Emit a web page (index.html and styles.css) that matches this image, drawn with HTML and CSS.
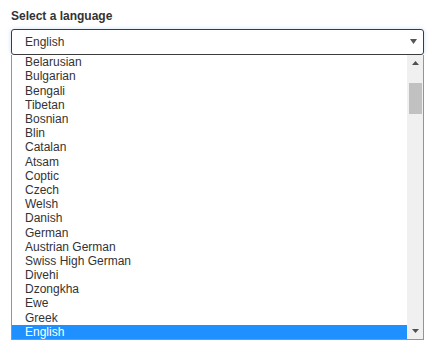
FILE: index.html
```html
<!DOCTYPE html>
<html>
<head>
<meta charset="utf-8">
<link rel="stylesheet" href="styles.css">
</head>
<body>
<div class="field">
  <div class="label">Select a language</div>
  <div class="select">
    <span class="value">English</span>
    <svg class="caret" width="7" height="5" viewBox="0 0 7 5"><path d="M0 0H7L3.5 5Z" fill="#555"/></svg>
  </div>
  <div class="popup">
    <ul class="options">
      <li>Belarusian</li>
      <li>Bulgarian</li>
      <li>Bengali</li>
      <li>Tibetan</li>
      <li>Bosnian</li>
      <li>Blin</li>
      <li>Catalan</li>
      <li>Atsam</li>
      <li>Coptic</li>
      <li>Czech</li>
      <li>Welsh</li>
      <li>Danish</li>
      <li>German</li>
      <li>Austrian German</li>
      <li>Swiss High German</li>
      <li>Divehi</li>
      <li>Dzongkha</li>
      <li>Ewe</li>
      <li>Greek</li>
      <li class="selected">English</li>
    </ul>
    <div class="scrollbar">
      <div class="arrow"><svg width="7" height="4" viewBox="0 0 7 4"><path d="M0 4H7L3.5 0Z" fill="#505050"/></svg></div>
      <div class="track"><div class="thumb"></div></div>
      <div class="arrow"><svg width="7" height="4" viewBox="0 0 7 4"><path d="M0 0H7L3.5 4Z" fill="#505050"/></svg></div>
    </div>
  </div>
</div>
</body>
</html>
```

FILE: styles.css
```css
html, body {
  margin: 0;
  padding: 0;
  background: #fff;
}
body {
  font-family: "Liberation Sans", Arial, sans-serif;
  font-size: 12px;
  color: #333;
}
.field {
  width: 413px;
  padding: 9px 0 0 11px;
}
.label {
  font-weight: bold;
  line-height: 15px;
  height: 15px;
  margin-bottom: 5px;
}
.select {
  box-sizing: border-box;
  height: 26px;
  border: 1px solid #3c3c3c;
  border-radius: 3px;
  box-shadow: 0 0 4px rgba(110, 160, 230, 0.35);
  display: flex;
  align-items: center;
  justify-content: space-between;
  padding: 0 6px 0 13px;
  background: #fff;
}
.value {
  line-height: 14px;
}
.caret {
  display: block;
  margin-top: -1px;
}
.popup {
  box-sizing: border-box;
  height: 285px;
  border: 1px solid #6f9ad8;
  border-top: none;
  display: flex;
  background: #fff;
}
.options {
  list-style: none;
  margin: 0;
  padding: 0;
  flex: 1;
  display: flex;
  flex-direction: column;
  justify-content: flex-end;
  overflow: hidden;
}
.options li {
  height: 14.2px;
  line-height: 14.2px;
  padding-left: 13px;
  white-space: nowrap;
  flex: none;
}
.options li.selected {
  background: #1e90ff;
  color: #fff;
}
.scrollbar {
  width: 16px;
  background: #f0f0f0;
  display: flex;
  flex-direction: column;
}
.arrow {
  height: 16px;
  display: flex;
  align-items: center;
  justify-content: center;
  flex: none;
}
.arrow svg {
  display: block;
  margin-left: 1px;
}
.track {
  flex: 1;
  padding-top: 12px;
}
.thumb {
  width: 13px;
  height: 31px;
  margin-left: 2px;
  background: #c1c1c1;
}
```
